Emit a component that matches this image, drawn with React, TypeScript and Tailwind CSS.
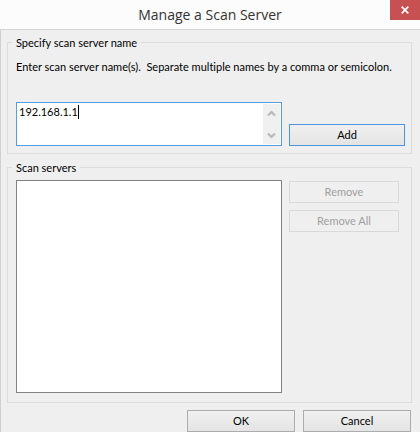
import { useState } from 'react';
import type { ButtonHTMLAttributes } from 'react';
import clsx from 'clsx';

function DialogButton({
  className,
  ...props
}: ButtonHTMLAttributes<HTMLButtonElement>) {
  return (
    <button
      className={clsx(
        'h-[22px] border text-center leading-4',
        props.disabled
          ? 'border-[#d9d9d9] bg-[#efefef] text-[#a0a0a0]'
          : 'bg-linear-to-b from-[#f0f0f0] to-[#e4e4e4] text-black',
        className,
      )}
      type="button"
      {...props}
    />
  );
}

function ScrollArrow({ direction }: { direction: 'up' | 'down' }) {
  return (
    <button
      aria-label={`Scroll ${direction}`}
      className="flex h-[18px] w-full items-center justify-center"
      tabIndex={-1}
      type="button"
    >
      <svg className="h-[7px] w-[9px]" fill="none" viewBox="0 0 9 7">
        <path
          d={direction === 'up' ? 'M1 5.5 4.5 2 8 5.5' : 'M1 1.5 4.5 5 8 1.5'}
          stroke="#b8b8b8"
          strokeWidth="2.2"
        />
      </svg>
    </button>
  );
}

export default function App() {
  const [names, setNames] = useState('192.168.1.1');
  const [servers, setServers] = useState<string[]>([]);
  const [selected, setSelected] = useState<string[]>([]);

  const addServers = () => {
    const added = names
      .split(/[,;]/)
      .map((name) => name.trim())
      .filter((name) => name && !servers.includes(name));
    setServers([...servers, ...added]);
    setNames('');
  };

  return (
    <div className="flex min-h-screen flex-col bg-[#efefef] font-[Lato,'Liberation_Sans',sans-serif] text-[11px] text-black [font-variant-ligatures:none]">
      <header className="flex h-[30px] items-start border-b border-[#d6d6d6] bg-[#fcfcfc]">
        <h1 className="flex-1 pl-[30px] text-center font-['Open_Sans',sans-serif] text-[14px] leading-[29px] text-[#333333]">
          Manage a Scan Server
        </h1>
        <button
          aria-label="Close"
          className="flex h-5 w-[30px] items-center justify-center bg-[#c75050]"
          type="button"
        >
          <svg className="h-2 w-2" viewBox="0 0 8 8">
            <path d="M.7.7 7.3 7.3M7.3.7.7 7.3" stroke="#ffffff" strokeWidth="1.7" />
          </svg>
        </button>
      </header>

      <main className="flex flex-1 flex-col border-l border-[#d0d0d0] pl-[6px] pr-2 pt-[5px]">
        <fieldset className="border border-[#dcdcdc] pb-[7px] pl-2 pr-[6px]">
          <legend className="-ml-1 px-1 leading-[15px]">Specify scan server name</legend>
          <label className="mt-[9px] block whitespace-pre-wrap leading-4" htmlFor="names">
            {'Enter scan server name(s).  Separate multiple names by a comma or semicolon.'}
          </label>
          <div className="mt-[27px] flex items-end gap-[7px]">
            <div className="relative flex h-11 flex-1 border border-[#569de5] bg-white">
              <textarea
                className="h-full min-w-0 flex-1 resize-none overflow-hidden bg-transparent px-[2px] pt-px leading-4 outline-none"
                id="names"
                onChange={(event) => setNames(event.target.value)}
                value={names}
              />
              <div className="my-px mr-px flex w-[17px] flex-col justify-between bg-[#f0f0f0]">
                <ScrollArrow direction="up" />
                <ScrollArrow direction="down" />
              </div>
              {/* text caret behind the typed name */}
              <div className="pointer-events-none absolute left-[2px] top-[2px] flex h-[14px]">
                <span className="invisible">{names}</span>
                <span className="w-px bg-black" />
              </div>
            </div>
            <DialogButton className="w-[116px] border-[#4a95dc]" onClick={addServers}>
              Add
            </DialogButton>
          </div>
        </fieldset>

        <fieldset className="mt-[6px] border border-[#dcdcdc] pb-[9px] pl-2 pr-[6px]">
          <legend className="-ml-1 px-1 leading-[15px]">Scan servers</legend>
          <div className="mt-[5px] flex gap-[7px]">
            <select
              aria-label="Scan servers"
              className="h-[213px] min-w-0 flex-1 overflow-hidden border border-[#828282] bg-white outline-none"
              multiple
              onChange={(event) =>
                setSelected(Array.from(event.target.selectedOptions, (option) => option.value))
              }
              value={selected}
            >
              {servers.map((server) => (
                <option key={server} value={server}>
                  {server}
                </option>
              ))}
            </select>
            <div className="flex w-[116px] flex-col gap-[7px] pr-[6px] pt-px">
              <DialogButton
                disabled={selected.length === 0}
                onClick={() => {
                  setServers(servers.filter((server) => !selected.includes(server)));
                  setSelected([]);
                }}
              >
                Remove
              </DialogButton>
              <DialogButton
                disabled={servers.length === 0}
                onClick={() => {
                  setServers([]);
                  setSelected([]);
                }}
              >
                Remove All
              </DialogButton>
            </div>
          </div>
        </fieldset>

        <footer className="mt-[7px] flex justify-end gap-2 pr-px">
          <DialogButton className="w-[108px] border-[#acacac]">OK</DialogButton>
          <DialogButton className="w-[108px] border-[#acacac]">Cancel</DialogButton>
        </footer>
      </main>
    </div>
  );
}
